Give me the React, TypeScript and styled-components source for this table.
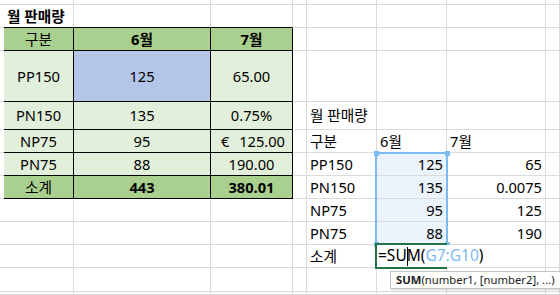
import React from 'react';
import styled, { createGlobalStyle } from 'styled-components';

const GRID = '#DADADA';
const INK = '#000000';
const HEAD = '#A9D08E';
const BODY = '#E2EFDA';
const PICK = '#B4C6E7';
const RANGE = '#EBF3FC';
const REF = '#7CBAF2';
const ACTIVE = '#217346';

const Global = createGlobalStyle`
  html, body {
    margin: 0;
    padding: 0;
    width: 560px;
    height: 295px;
    overflow: hidden;
    background: #ffffff;
  }
  body {
    font-family: "Noto Sans", "Noto Sans CJK KR", sans-serif;
  }
`;

const Sheet = styled.div`
  display: grid;
  grid-template-columns: 4px 70px 137px 82px 14px 70px 70px 99px 1fr;
  grid-template-rows: 5px 23px 23px 51px 28px 23px 23px 23px 23px 23px 23px 24px 1fr;
  width: 560px;
  height: 295px;
  overflow: hidden;
  font-size: 14.67px;
  line-height: 1;
  color: #000;
`;

type Align = 'left' | 'center' | 'right' | 'split';

const Cell = styled.div<{
  $bg: string;
  $right: string;
  $bottom: string;
  $align: Align;
  $bold: boolean;
  $row: number;
  $col: number;
}>`
  grid-row: ${(p) => p.$row + 1};
  grid-column: ${(p) => p.$col + 1};
  box-sizing: border-box;
  display: flex;
  align-items: center;
  justify-content: ${(p) =>
    p.$align === 'center'
      ? 'center'
      : p.$align === 'right'
      ? 'flex-end'
      : p.$align === 'split'
      ? 'space-between'
      : 'flex-start'};
  padding: ${(p) => (p.$align === 'split' ? '0 7px 0 10px' : '0 3px')};
  background: ${(p) => p.$bg};
  border-right: 1px solid ${(p) => p.$right};
  border-bottom: 1px solid ${(p) => p.$bottom};
  font-weight: ${(p) => (p.$bold ? 700 : 400)};
  white-space: nowrap;
  overflow: visible;
`;

const SelectionFrame = styled.div`
  grid-row: 7 / 11;
  grid-column: 7 / 8;
  margin: -1px -1px 0 -2px;
  border: 2px solid ${REF};
  position: relative;
  z-index: 2;
  pointer-events: none;
`;

const Handle = styled.span<{ $x: 'left' | 'right'; $y: 'top' | 'bottom' }>`
  position: absolute;
  width: 5px;
  height: 5px;
  background: ${REF};
  ${(p) => (p.$x === 'left' ? 'left: -3.5px;' : 'right: -3.5px;')}
  ${(p) => (p.$y === 'top' ? 'top: -3.5px;' : 'bottom: -3.5px;')}
`;

const ActiveCell = styled.div`
  grid-row: 11 / 12;
  grid-column: 7 / 8;
  margin: -2px 0 -1px -2px;
  border-top: 2px solid ${ACTIVE};
  border-left: 2px solid ${ACTIVE};
  border-bottom: 2px solid ${ACTIVE};
  background: #ffffff;
  position: relative;
  z-index: 3;
`;

const Editor = styled.div`
  position: absolute;
  left: 0;
  top: 0;
  bottom: 0;
  display: flex;
  align-items: center;
  padding: 0 4px 0 1px;
  background: #ffffff;
  white-space: nowrap;
  font-size: 15.5px;
`;

const RefText = styled.span`
  color: ${REF};
`;

const Caret = styled.span`
  display: inline-block;
  width: 1px;
  height: 19px;
  background: #000;
  margin: 0 -1px 0 0;
  vertical-align: middle;
`;

const Tip = styled.div`
  position: absolute;
  top: calc(100% + 4px);
  left: 13px;
  height: 18px;
  box-sizing: border-box;
  display: flex;
  align-items: center;
  padding: 0 6px 0 5px;
  background: #ffffff;
  border: 1px solid #c4c4c4;
  box-shadow: 1px 1px 2px rgba(0, 0, 0, 0.18);
  font-size: 11.3px;
  color: #222;
  white-space: nowrap;
`;

const TipName = styled.b`
  font-weight: 700;
`;

type Spec = {
  text?: React.ReactNode;
  bg?: string;
  right?: string;
  bottom?: string;
  align?: Align;
  bold?: boolean;
};

const ROWS = 13;
const COLS = 9;

function buildCells(): Record<string, Spec> {
  const m: Record<string, Spec> = {};
  const set = (r: number, c: number, s: Spec) => {
    m[`${r},${c}`] = { ...(m[`${r},${c}`] || {}), ...s };
  };

  for (let r = 2; r <= 7; r++) set(r, 0, { right: INK });
  for (let c = 1; c <= 3; c++) set(1, c, { bottom: INK });
  for (let r = 2; r <= 7; r++)
    for (let c = 1; c <= 3; c++)
      set(r, c, {
        right: INK,
        bottom: INK,
        bg: r === 2 || r === 7 ? HEAD : BODY,
        align: 'center',
      });
  set(3, 2, { bg: PICK });

  set(1, 1, { text: '월 판매량', bold: true });
  const left: [string, string, React.ReactNode, boolean?][] = [
    ['구분', '6월', '7월', true],
    ['PP150', '125', '65.00'],
    ['PN150', '135', '0.75%'],
    ['NP75', '95', 'EURO'],
    ['PN75', '88', '190.00'],
    ['소계', '443', '380.01', true],
  ];
  left.forEach(([a, b, c, bold], i) => {
    const r = 2 + i;
    set(r, 1, { text: a });
    set(r, 2, { text: b, bold: !!bold });
    if (c === 'EURO') {
      set(r, 3, {
        align: 'split',
        text: (
          <>
            <span>€</span>
            <span>125.00</span>
          </>
        ),
      });
    } else {
      set(r, 3, { text: c, bold: !!bold });
    }
  });

  set(4, 5, { text: '월 판매량' });
  set(5, 5, { text: '구분' });
  set(5, 6, { text: '6월' });
  set(5, 7, { text: '7월' });
  const right: [string, string, string][] = [
    ['PP150', '125', '65'],
    ['PN150', '135', '0.0075'],
    ['NP75', '95', '125'],
    ['PN75', '88', '190'],
  ];
  right.forEach(([a, b, c], i) => {
    const r = 6 + i;
    set(r, 5, { text: a });
    set(r, 6, { text: b, align: 'right', bg: RANGE });
    set(r, 7, { text: c, align: 'right' });
  });
  set(10, 5, { text: '소계' });
  return m;
}

const cells = buildCells();

export default function App() {
  const items: React.ReactNode[] = [];
  for (let r = 0; r < ROWS; r++) {
    for (let c = 0; c < COLS; c++) {
      const s = cells[`${r},${c}`] || {};
      items.push(
        <Cell
          key={`${r}-${c}`}
          $row={r}
          $col={c}
          $bg={s.bg || '#ffffff'}
          $right={s.right || GRID}
          $bottom={s.bottom || GRID}
          $align={s.align || 'left'}
          $bold={!!s.bold}
        >
          {s.text}
        </Cell>
      );
    }
  }

  return (
    <>
      <Global />
      <Sheet>
        {items}
        <SelectionFrame>
          <Handle $x="left" $y="top" />
          <Handle $x="right" $y="top" />
          <Handle $x="left" $y="bottom" />
          <Handle $x="right" $y="bottom" />
        </SelectionFrame>
        <ActiveCell>
          <Editor>
            =SU
            <Caret />
            M(<RefText>G7:G10</RefText>)
          </Editor>
          <Tip>
            <TipName>SUM</TipName>(number1, [number2], ...)
          </Tip>
        </ActiveCell>
      </Sheet>
    </>
  );
}
